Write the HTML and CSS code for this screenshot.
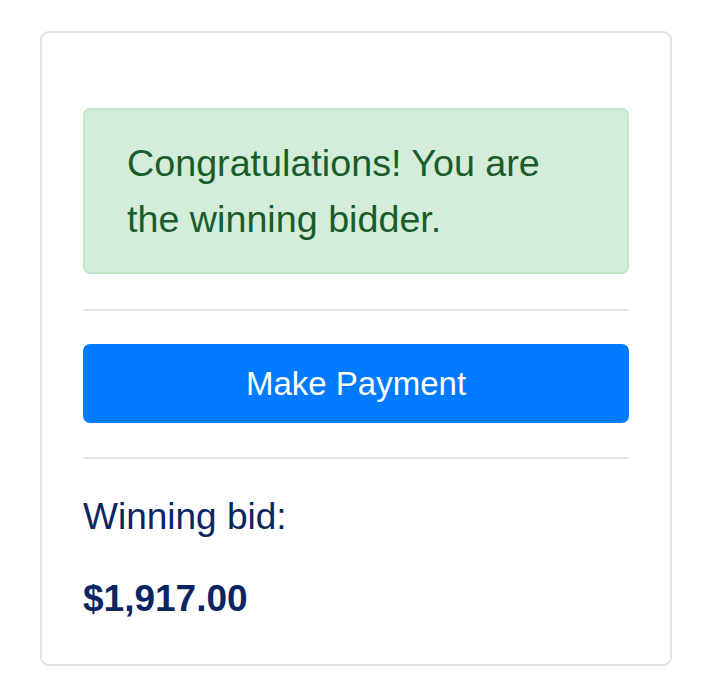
FILE: index.html
```html
<!DOCTYPE html>
<html lang="en">
<head>
<meta charset="utf-8">
<title>Auction result</title>
<link rel="stylesheet" href="styles.css">
</head>
<body>
<div class="card">
  <div class="alert">Congratulations! You are the winning bidder.</div>
  <hr class="rule rule-top">
  <button class="btn" type="button">Make Payment</button>
  <hr class="rule rule-bottom">
  <p class="label">Winning bid:</p>
  <p class="amount">$1,917.00</p>
</div>
</body>
</html>
```
FILE: styles.css
```css
* { box-sizing: border-box; }
html, body { margin: 0; padding: 0; background: #ffffff; }
body {
  font-family: "Liberation Sans", Arial, Helvetica, sans-serif;
  padding: 31px 0 0 40px;
}
.card {
  width: 632px;
  height: 635px;
  border: 2px solid #e2e2e2;
  border-radius: 9px;
  padding: 75px 41px 37px 41px;
  display: flex;
  flex-direction: column;
}
.alert {
  background: #d4edda;
  border: 2px solid #c3e6cb;
  border-radius: 7px;
  color: #1a5c2b;
  font-size: 37.7px;
  line-height: 56px;
  padding: 25px 42px;
}
.rule {
  border: 0;
  height: 2px;
  background: #e6e6e6;
  margin: 0;
  width: 100%;
}
.rule-top { margin: 35px 0 33px; }
.rule-bottom { margin: 34px 0 30px; }
.btn {
  height: 79px;
  width: 100%;
  background: #007bff;
  color: #ffffff;
  border: 0;
  border-radius: 7px;
  font-family: "Liberation Sans", Arial, Helvetica, sans-serif;
  font-size: 33px;
  display: flex;
  align-items: center;
  justify-content: center;
  padding: 0;
}
.label, .amount {
  margin: 0;
  font-size: 37px;
  line-height: 56px;
  color: #0b2561;
}
.label { margin-bottom: 26px; }
.amount { font-weight: 700; }
```
